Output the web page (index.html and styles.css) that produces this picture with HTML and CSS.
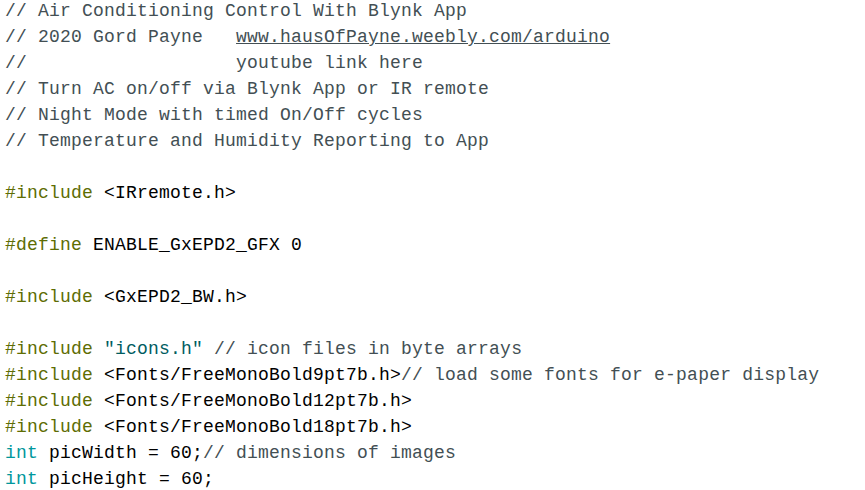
FILE: index.html
```html
<!DOCTYPE html>
<html>
<head>
  <link rel="stylesheet" href="styles.css">
</head>
<body>
  <pre class="code"><span class="comment">// Air Conditioning Control With Blynk App</span>
<span class="comment">// 2020 Gord Payne   <span class="link">www.hausOfPayne.weebly.com/arduino</span></span>
<span class="comment">//                   youtube link here</span>
<span class="comment">// Turn AC on/off via Blynk App or IR remote</span>
<span class="comment">// Night Mode with timed On/Off cycles</span>
<span class="comment">// Temperature and Humidity Reporting to App</span>

<span class="directive">#include</span> &lt;IRremote.h&gt;

<span class="directive">#define</span> ENABLE_GxEPD2_GFX 0

<span class="directive">#include</span> &lt;GxEPD2_BW.h&gt;

<span class="directive">#include</span> <span class="string">"icons.h"</span> <span class="comment">// icon files in byte arrays</span>
<span class="directive">#include</span> &lt;Fonts/FreeMonoBold9pt7b.h&gt;<span class="comment">// load some fonts for e-paper display</span>
<span class="directive">#include</span> &lt;Fonts/FreeMonoBold12pt7b.h&gt;
<span class="directive">#include</span> &lt;Fonts/FreeMonoBold18pt7b.h&gt;
<span class="type">int</span> picWidth = 60;<span class="comment">// dimensions of images</span>
<span class="type">int</span> picHeight = 60;</pre>
</body>
</html>
```

FILE: styles.css
```css
body {
  margin: 0;
  padding: 0;
  background-color: #ffffff;
  color: #000000;
  overflow: hidden;
}

.code {
  margin: -2px 0 0;
  padding: 0 5px;
  font-family: 'Courier New', 'Nimbus Mono PS', 'FreeMono', 'Liberation Mono', monospace;
  font-size: 18px;
  letter-spacing: 0.2px;
  line-height: 26px;
  white-space: pre;
}

.comment {
  color: #434f54;
}

.link {
  text-decoration: underline;
}

.directive {
  color: #5e6d03;
}

.type {
  color: #00979c;
}

.string {
  color: #005c5f;
}
```
